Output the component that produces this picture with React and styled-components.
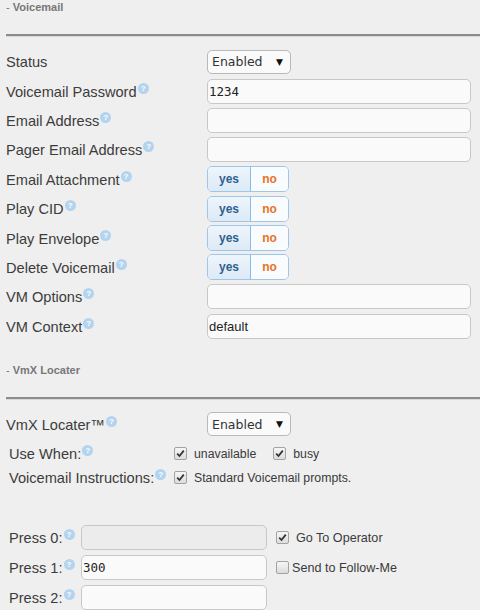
import React from "react"
import styled, { createGlobalStyle } from "styled-components"

const GlobalStyle = createGlobalStyle`
  html, body {
    margin: 0;
    padding: 0;
    background: #efefef;
  }
  body {
    font-family: "Liberation Sans", Arial, sans-serif;
    font-size: 14px;
    color: #3a3a3a;
  }
`

const Page = styled.div`
  width: 480px;
  height: 610px;
  overflow: hidden;
  padding-left: 6px;
  box-sizing: border-box;
`

const SectionTitle = styled.div`
  height: ${p => p.$height}px;
  display: flex;
  align-items: center;
  font-size: 11px;
  color: #777;
  span {
    font-weight: bold;
  }
`

const Rule = styled.div`
  height: 2px;
  background: #8c8c8c;
  border-bottom: 1px solid #d8d8d8;
  margin-bottom: ${p => p.$after}px;
`

const Row = styled.div`
  display: flex;
  align-items: center;
  height: ${p => p.$h || 29.4}px;
  padding-left: ${p => p.$indent || 0}px;
  margin-bottom: ${p => p.$mb || 0}px;
`

const Label = styled.div`
  width: ${p => p.$w}px;
  flex-shrink: 0;
  font-size: 14.6px;
  color: #3c3c3c;
  white-space: nowrap;
`

const Help = styled.span`
  display: inline-block;
  width: 11px;
  height: 11px;
  border-radius: 50%;
  background: #b3d3ee;
  color: #fff;
  font-size: 8px;
  font-weight: bold;
  line-height: 11px;
  text-align: center;
  vertical-align: 6px;
  margin-left: 1px;
`

const Select = styled.div`
  width: 84px;
  height: 24px;
  border: 1px solid #b9b9b9;
  border-radius: 5px;
  background: #fafafa;
  display: flex;
  align-items: center;
  justify-content: space-between;
  padding: 0 7px 0 4px;
  box-sizing: border-box;
  font-family: "DejaVu Sans", Verdana, sans-serif;
  font-size: 12.5px;
  color: #333;
  i {
    font-style: normal;
    font-size: 9px;
    color: #111;
  }
`

const Input = styled.input`
  width: ${p => p.$w}px;
  height: 25px;
  box-sizing: border-box;
  border: 1px solid #c8c8c8;
  border-radius: 5px;
  background: ${p => (p.disabled ? "#ececec" : "#fafafa")};
  padding: 0 1px;
  margin: 0;
  font-family: ${p =>
    p.$mono ? `"DejaVu Sans Mono", "Liberation Mono", monospace` : `"Liberation Sans", Arial, sans-serif`};
  font-size: ${p => (p.$mono ? 12.5 : 13)}px;
  color: #222;
  outline: none;
`

const Toggle = styled.div`
  display: flex;
  width: 82px;
  height: 26px;
  box-sizing: border-box;
  border: 1px solid #9fc6e9;
  border-radius: 5px;
  overflow: hidden;
  font-size: 12px;
  font-weight: bold;
`

const ToggleHalf = styled.div`
  flex: ${p => (p.$yes ? "0 0 42px" : "1")};
  display: flex;
  align-items: center;
  justify-content: center;
  background: ${p => (p.$yes ? "linear-gradient(#eef5fc, #dceaf7)" : "#f9fcff")};
  color: ${p => (p.$yes ? "#2f5f8f" : "#e8731e")};
  border-left: ${p => (p.$yes ? "none" : "1px solid #8cbbe6")};
`

const Box = styled.span`
  display: inline-flex;
  align-items: center;
  justify-content: center;
  width: 11px;
  height: 11px;
  border: 1px solid #a3a3a3;
  border-radius: 2px;
  background: linear-gradient(#f6f6f6, #dcdcdc);
  flex-shrink: 0;
`

const CheckItem = styled.div`
  display: flex;
  align-items: center;
  gap: ${p => p.$gap || 7}px;
  font-size: ${p => p.$size || 12.3}px;
  color: #3a3a3a;
  margin-left: ${p => p.$ml || 0}px;
  margin-right: ${p => p.$mr || 0}px;
  white-space: nowrap;
`

const Gap = styled.div`
  height: ${p => p.$h}px;
`

const Check = ({ checked }) => (
  <Box>
    {checked && (
      <svg width="9" height="9" viewBox="0 0 9 9">
        <path d="M1.2 4.6 L3.5 7 L7.8 1.6" fill="none" stroke="#333" strokeWidth="1.8" />
      </svg>
    )}
  </Box>
)

const HelpIcon = () => <Help>?</Help>

const Field = ({ label, help = true, children }) => (
  <Row>
    <Label $w={201}>
      {label}
      {help && <HelpIcon />}
    </Label>
    {children}
  </Row>
)

const YesNo = () => (
  <Toggle>
    <ToggleHalf $yes>yes</ToggleHalf>
    <ToggleHalf>no</ToggleHalf>
  </Toggle>
)

const PressRow = ({ n, value, disabled, children }) => (
  <Row $indent={3} $h={30}>
    <Label $w={72}>
      Press {n}:<HelpIcon />
    </Label>
    <Input $w={186} $mono defaultValue={value} disabled={disabled} readOnly />
    {children}
  </Row>
)

const App = () => (
  <Page>
    <GlobalStyle />
    <SectionTitle $height={14}>
      -&nbsp;<span>Voicemail</span>
    </SectionTitle>
    <Gap $h={20} />
    <Rule $after={10} />

    <Field label="Status" help={false}>
      <Select>
        Enabled<i>▼</i>
      </Select>
    </Field>
    <Field label="Voicemail Password">
      <Input $w={264} $mono defaultValue="1234" readOnly />
    </Field>
    <Field label="Email Address">
      <Input $w={264} readOnly />
    </Field>
    <Field label="Pager Email Address">
      <Input $w={264} readOnly />
    </Field>
    <Field label="Email Attachment">
      <YesNo />
    </Field>
    <Field label="Play CID">
      <YesNo />
    </Field>
    <Field label="Play Envelope">
      <YesNo />
    </Field>
    <Field label="Delete Voicemail">
      <YesNo />
    </Field>
    <Field label="VM Options">
      <Input $w={264} readOnly />
    </Field>
    <Field label="VM Context">
      <Input $w={264} defaultValue="default" readOnly />
    </Field>

    <Gap $h={23} />
    <SectionTitle $height={13}>
      -&nbsp;<span>VmX Locater</span>
    </SectionTitle>
    <Gap $h={20} />
    <Rule $after={10} />

    <Row $h={29} $mb={3}>
      <Label $w={201}>
        VmX Locater™<HelpIcon />
      </Label>
      <Select>
        Enabled<i>▼</i>
      </Select>
    </Row>
    <Row $h={24} $indent={3}>
      <Label $w={165}>
        Use When:<HelpIcon />
      </Label>
      <CheckItem $mr={17}>
        <Check checked />
        unavailable
      </CheckItem>
      <CheckItem>
        <Check checked />
        busy
      </CheckItem>
    </Row>
    <Row $h={24} $indent={3}>
      <Label $w={165}>
        Voicemail Instructions:<HelpIcon />
      </Label>
      <CheckItem>
        <Check checked />
        Standard Voicemail prompts.
      </CheckItem>
    </Row>

    <Gap $h={33} />
    <PressRow n={0} disabled value="">
      <CheckItem $size={12.6} $gap={7} $ml={9}>
        <Check checked />
        Go To Operator
      </CheckItem>
    </PressRow>
    <PressRow n={1} value="300">
      <CheckItem $size={12.6} $gap={3} $ml={9}>
        <Check />
        Send to Follow-Me
      </CheckItem>
    </PressRow>
    <PressRow n={2} value="" />
  </Page>
)

export default App
